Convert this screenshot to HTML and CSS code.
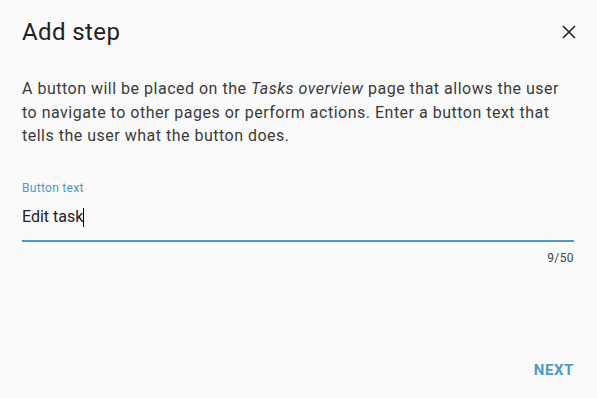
FILE: index.html
```html
<!DOCTYPE html>
<html>
<head>
<meta charset="utf-8">
<link rel="stylesheet" href="styles.css">
</head>
<body>
<div class="dialog">
  <div class="header">
    <h2 class="title">Add step</h2>
    <button class="close" aria-label="Close">
      <svg width="14" height="14" viewBox="0 0 14 14"><path d="M1 1L13 13M13 1L1 13" stroke="#222" stroke-width="1.6" fill="none"/></svg>
    </button>
  </div>
  <p class="content">A button will be placed on the <em>Tasks overview</em> page that allows the user to navigate to other pages or perform actions. Enter a button text that tells the user what the button does.</p>
  <div class="field">
    <label class="label">Button text</label>
    <div class="input"><span>Edit task</span><span class="caret"></span></div>
    <div class="counter">9/50</div>
  </div>
  <div class="actions">
    <button class="next">NEXT</button>
  </div>
</div>
</body>
</html>
```
FILE: styles.css
```css
html, body { margin: 0; padding: 0; }
body {
  background: #fafafa;
  font-family: Roboto, "Noto Sans", sans-serif;
  width: 597px;
  height: 398px;
  overflow: hidden;
}
.dialog {
  height: 398px;
  padding: 0 23px 0 22px;
  box-sizing: border-box;
  display: flex;
  flex-direction: column;
}
.header {
  display: flex;
  justify-content: space-between;
  align-items: center;
  height: 64px;
}
.title {
  margin: 0;
  font-weight: 400;
  font-size: 24px;
  color: #212121;
  letter-spacing: 0.4px;
}
.close {
  border: 0;
  background: none;
  padding: 0;
  margin-right: -2px;
  display: flex;
}
.content {
  margin: 13px 0 0;
  font-size: 16px;
  line-height: 23.5px;
  letter-spacing: 0.5px;
  color: #3a3a3a;
}
.field {
  margin-top: 33px;
}
.label {
  display: block;
  font-size: 12px;
  color: #4a9cc8;
  letter-spacing: 0.3px;
  line-height: 14px;
}
.input {
  margin-top: 11px;
  height: 36px;
  box-sizing: border-box;
  border-bottom: 2px solid #4a9cc8;
  font-size: 16px;
  color: #212121;
  display: flex;
  align-items: flex-start;
  line-height: 22px;
}
.caret {
  display: inline-block;
  width: 1px;
  height: 19px;
  background: #000;
  margin-top: 2px;
}
.counter {
  text-align: right;
  font-size: 12px;
  line-height: 14px;
  color: #444;
  margin-top: 9px;
  letter-spacing: 0.4px;
}
.actions {
  margin-top: auto;
  display: flex;
  justify-content: flex-end;
  padding-bottom: 19px;
}
.next {
  border: 0;
  background: none;
  padding: 0;
  font-family: Roboto, sans-serif;
  font-weight: 700;
  font-size: 15px;
  color: #4a9cc8;
  letter-spacing: 0.6px;
}
```
